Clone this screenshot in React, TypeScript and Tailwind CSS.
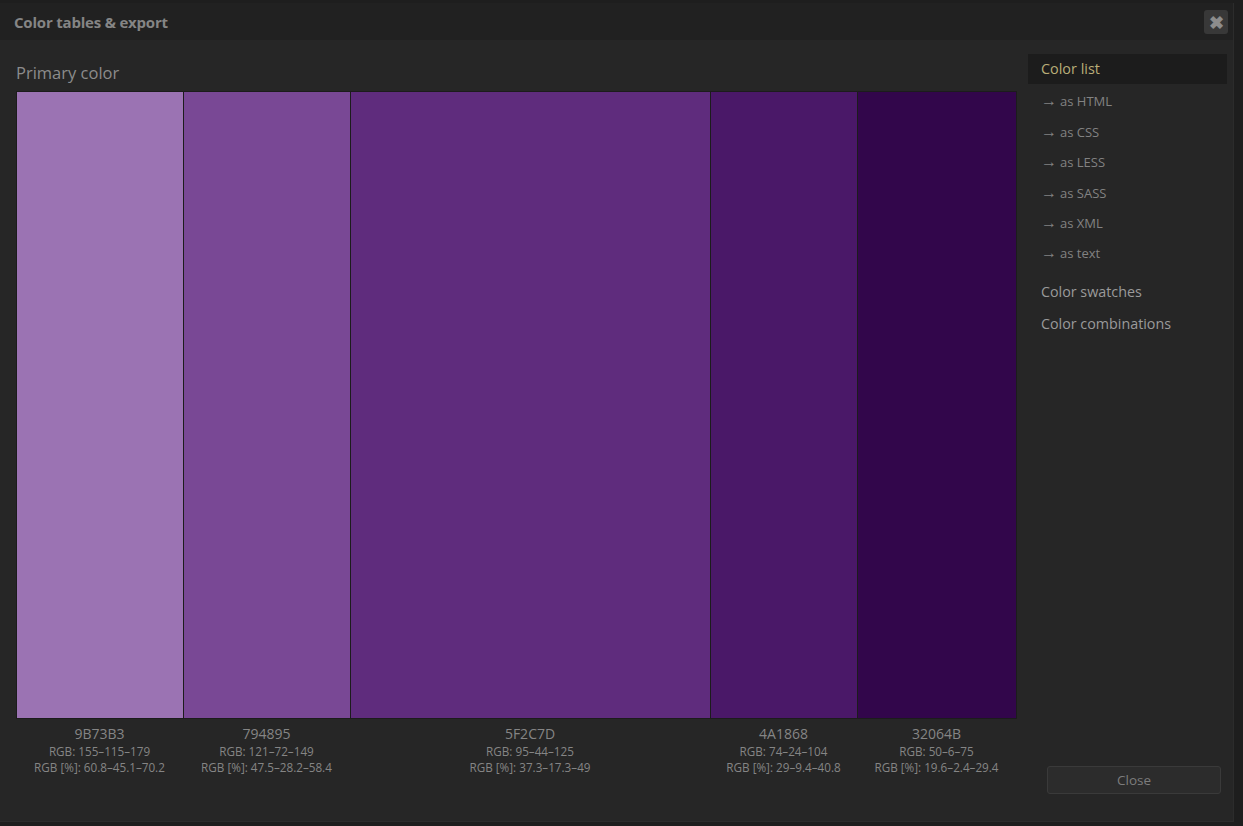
import React from "react";

const swatches = [
  { hex: "9B73B3", w: 167, rgb: "155–115–179", pct: "60.8–45.1–70.2" },
  { hex: "794895", w: 167, rgb: "121–72–149", pct: "47.5–28.2–58.4" },
  { hex: "5F2C7D", w: 360, rgb: "95–44–125", pct: "37.3–17.3–49" },
  { hex: "4A1868", w: 147, rgb: "74–24–104", pct: "29–9.4–40.8" },
  { hex: "32064B", w: 159, rgb: "50–6–75", pct: "19.6–2.4–29.4" },
];

const subItems = ["as HTML", "as CSS", "as LESS", "as SASS", "as XML", "as text"];

export default function App() {
  return (
    <div
      className="h-[826px] w-[1243px] bg-[#1e1e1e] pt-[3px] pr-[9px] pb-[4px] overflow-hidden"
      style={{ fontFamily: '"Open Sans", "Noto Sans", sans-serif' }}
    >
      <div className="h-full flex flex-col bg-[#262626] border-r border-b border-[#2c2c2c]">
        {/* Header */}
        <div className="h-[37px] shrink-0 bg-[#212121] flex items-center justify-between pl-[14px] pr-[5px]">
          <div className="text-[15px] font-bold text-[#858585] tracking-[-0.2px] pt-[1px]">Color tables &amp; export</div>
          <div className="w-[24px] h-[24px] rounded-[3px] bg-[#383838] flex items-center justify-center text-[#8c8c8c] text-[18px] font-bold leading-none">
            ✖
          </div>
        </div>
        {/* Body */}
        <div className="flex-1 flex">
          <div className="w-[1017px] shrink-0 pl-[16px] pt-[21px]">
            <div className="text-[16.5px] leading-[24px] text-[#8c8c8c] mb-[6px]">Primary color</div>
            <div className="flex h-[628px] border border-[#1c1c1c] w-[1001px]">
              {swatches.map((s, i) => (
                <div
                  key={s.hex}
                  className={i === 0 ? "h-full shrink-0" : "h-full shrink-0 border-l border-[#1c1c1c]"}
                  style={{ width: i === 0 ? s.w - 1 : s.w, backgroundColor: "#" + s.hex }}
                />
              ))}
            </div>
            <div className="flex w-[1001px] pt-[6px]">
              {swatches.map((s) => (
                <div key={s.hex} className="flex flex-col items-center text-[#858585]" style={{ width: s.w }}>
                  <div className="text-[14px] leading-[18px]">{s.hex}</div>
                  <div className="text-[11.7px] leading-[16px]">RGB: {s.rgb}</div>
                  <div className="text-[11.7px] leading-[16px]">RGB [%]: {s.pct}</div>
                </div>
              ))}
            </div>
          </div>
          <div className="ml-[11px] w-[199px] flex flex-col justify-between pt-[14px] pb-[27px]">
            <div className="flex flex-col">
              <div className="h-[30px] bg-[#1c1c1c] flex items-center pl-[13px] text-[14.4px] text-[#b9ad78]">Color list</div>
              <div className="mt-[3px] flex flex-col">
                {subItems.map((t) => (
                  <div key={t} className="h-[30.4px] flex items-center pl-[13px] text-[13px] text-[#828282]">
                    <span>
                      <span className="inline-block w-[19px] text-[16px] leading-none">→</span>
                      {t}
                    </span>
                  </div>
                ))}
              </div>
              <div className="mt-[6px] h-[32px] flex items-center pl-[13px] text-[14.3px] text-[#9a9a9a]">Color swatches</div>
              <div className="h-[32px] flex items-center pl-[13px] text-[14.3px] text-[#9a9a9a]">Color combinations</div>
            </div>
            <div className="ml-[19px] w-[174px] h-[28px] rounded-[3px] bg-[#2c2c2c] border border-[#3a3a3a] flex items-center justify-center text-[13.5px] text-[#7c7c7c] pt-[1px]">
              Close
            </div>
          </div>
        </div>
      </div>
    </div>
  );
}
